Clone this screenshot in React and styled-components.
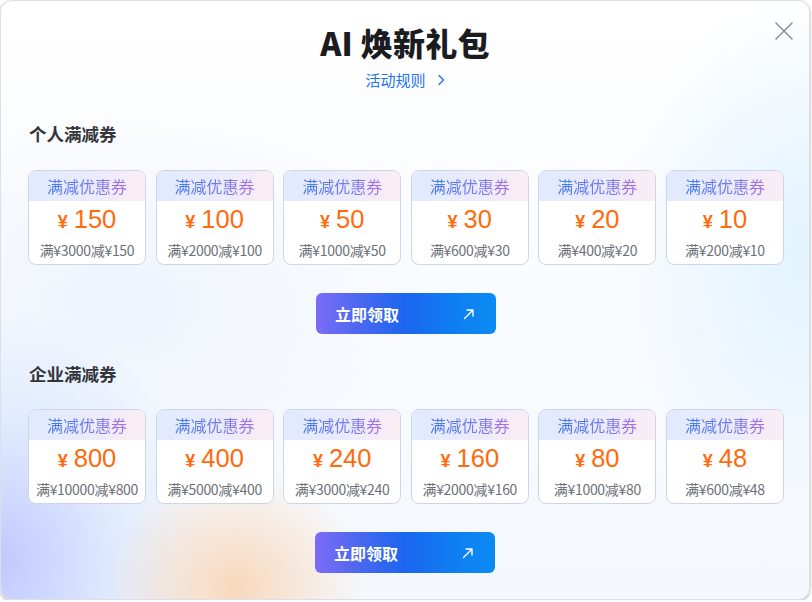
import styled, { createGlobalStyle } from "styled-components";

const GlobalStyle = createGlobalStyle`
  html, body {
    margin: 0;
    padding: 0;
    background: #fff;
  }
  body {
    font-family: "Noto Sans CJK SC", "Noto Sans", "Liberation Sans", sans-serif;
  }
`;

const Modal = styled.div`
  position: relative;
  box-sizing: border-box;
  width: 810px;
  height: 600px;
  border-radius: 12px;
  border: 1px solid #dcdfe6;
  box-shadow: 0 1px 3px rgba(0, 0, 0, 0.35);
  overflow: hidden;
  background:
    radial-gradient(ellipse 130px 120px at 235px 585px, rgba(250, 208, 172, 0.8), rgba(250, 208, 172, 0) 100%),
    radial-gradient(ellipse 210px 250px at 0px 560px, rgba(190, 198, 255, 0.95), rgba(210, 226, 255, 0.6) 55%, rgba(214, 228, 255, 0) 100%),
    radial-gradient(ellipse 200px 260px at 812px 250px, rgba(222, 242, 255, 0.9), rgba(222, 242, 255, 0) 100%),
    radial-gradient(ellipse 300px 200px at 120px 300px, rgba(236, 242, 252, 0.8), rgba(236, 242, 252, 0) 100%),
    linear-gradient(180deg, #ffffff 0%, #fbfcfe 30%, #f4f8fd 100%);
  padding: 18px 27px 0 27px;
  display: flex;
  flex-direction: column;
`;

const Close = styled.button`
  position: absolute;
  top: 19px;
  right: 14px;
  width: 22px;
  height: 22px;
  padding: 0;
  border: none;
  background: none;
  cursor: pointer;
  display: flex;
  align-items: center;
  justify-content: center;
`;

const Header = styled.header`
  display: flex;
  flex-direction: column;
  align-items: center;
`;

const Title = styled.h1`
  margin: 0;
  font-size: 32px;
  line-height: 46px;
  font-weight: 900;
  color: #1b1c1f;
  letter-spacing: 0.3px;
`;

const RulesLink = styled.a`
  margin-top: 5px;
  display: flex;
  align-items: center;
  gap: 11px;
  font-size: 15px;
  line-height: 20px;
  color: #2474f0;
  text-decoration: none;
  cursor: pointer;
`;

const SectionTitle = styled.h2`
  margin: ${(p) => p.$top}px 0 0 1px;
  font-size: 17.5px;
  line-height: 24px;
  font-weight: 700;
  color: #33353a;
`;

const CardRow = styled.div`
  margin-top: ${(p) => p.$top}px;
  display: grid;
  grid-template-columns: repeat(6, 118px);
  column-gap: 9.6px;
`;

const Card = styled.div`
  box-sizing: border-box;
  height: 95px;
  border: 1px solid #cdd6e6;
  border-radius: 8px;
  background: #fff;
  overflow: hidden;
  display: flex;
  flex-direction: column;
`;

const CardHead = styled.div`
  height: 30px;
  display: flex;
  align-items: center;
  justify-content: center;
  background: linear-gradient(90deg, #e2eafe 0%, #ebebfb 60%, #fbedf4 100%);
`;

const CardHeadText = styled.span`
  font-size: 16px;
  line-height: 22px;
  background: linear-gradient(90deg, #3d78f4 0%, #7c79ee 60%, #ad6ee6 100%);
  -webkit-background-clip: text;
  background-clip: text;
  color: transparent;
`;

const Amount = styled.div`
  margin-top: 3px;
  display: flex;
  align-items: baseline;
  justify-content: center;
  gap: 6px;
  color: #ff6a0d;
  height: 30px;
`;

const Yen = styled.span`
  font-family: "Liberation Sans", "Noto Sans CJK SC", sans-serif;
  font-size: 18px;
  font-weight: 700;
`;

const Num = styled.span`
  font-family: "Liberation Sans", Arial, sans-serif;
  font-size: 25.5px;
  line-height: 30px;
`;

const Rule = styled.div`
  margin-top: 7px;
  text-align: center;
  font-size: 14px;
  line-height: 18px;
  color: #6c7078;
  letter-spacing: -0.3px;
  white-space: nowrap;
`;

const ButtonWrap = styled.div`
  margin-top: ${(p) => p.$top}px;
  display: flex;
  justify-content: center;
  padding-left: ${(p) => p.$shift}px;
`;

const ClaimButton = styled.button`
  width: 180px;
  height: 41px;
  border: none;
  border-radius: 6px;
  padding: 0 20px 0 19px;
  display: flex;
  align-items: center;
  justify-content: space-between;
  background: linear-gradient(90deg, #7c6cf7 0%, #4a67f0 25%, #1b66ef 50%, #0e80f2 80%, #0a8bf3 100%);
  color: #fff;
  font-family: inherit;
  font-size: 16px;
  font-weight: 700;
  cursor: pointer;
`;

const personal = [
  ["150", "满¥3000减¥150"],
  ["100", "满¥2000减¥100"],
  ["50", "满¥1000减¥50"],
  ["30", "满¥600减¥30"],
  ["20", "满¥400减¥20"],
  ["10", "满¥200减¥10"],
];

const business = [
  ["800", "满¥10000减¥800"],
  ["400", "满¥5000减¥400"],
  ["240", "满¥3000减¥240"],
  ["160", "满¥2000减¥160"],
  ["80", "满¥1000减¥80"],
  ["48", "满¥600减¥48"],
];

const Arrow = () => (
  <svg width="14" height="14" viewBox="0 0 14 14" fill="none">
    <path d="M2.5 11.5 L11 3 M5 3 H11 V9" stroke="#fff" strokeWidth="1.4" strokeLinecap="round" strokeLinejoin="round" />
  </svg>
);

const Coupons = ({ items, top }) => (
  <CardRow $top={top}>
    {items.map(([value, rule]) => (
      <Card key={rule}>
        <CardHead>
          <CardHeadText>满减优惠券</CardHeadText>
        </CardHead>
        <Amount>
          <Yen>¥</Yen>
          <Num>{value}</Num>
        </Amount>
        <Rule>{rule}</Rule>
      </Card>
    ))}
  </CardRow>
);

export default function App() {
  return (
    <>
      <GlobalStyle />
      <Modal>
        <Close aria-label="close">
          <svg width="18" height="18" viewBox="0 0 18 18">
            <path d="M1 1 L17 17 M17 1 L1 17" stroke="#8a8d93" strokeWidth="1.5" strokeLinecap="round" />
          </svg>
        </Close>
        <Header>
          <Title>AI 焕新礼包</Title>
          <RulesLink>
            活动规则
            <svg width="8" height="12" viewBox="0 0 8 12">
              <path d="M2 1.5 L6.5 6 L2 10.5" stroke="#2474f0" strokeWidth="1.4" fill="none" strokeLinecap="round" strokeLinejoin="round" />
            </svg>
          </RulesLink>
        </Header>

        <SectionTitle $top={32}>个人满减券</SectionTitle>
        <Coupons items={personal} top={24} />
        <ButtonWrap $top={28} $shift={2}>
          <ClaimButton>
            立即领取
            <Arrow />
          </ClaimButton>
        </ButtonWrap>

        <SectionTitle $top={28}>企业满减券</SectionTitle>
        <Coupons items={business} top={23} />
        <ButtonWrap $top={28} $shift={0}>
          <ClaimButton>
            立即领取
            <Arrow />
          </ClaimButton>
        </ButtonWrap>
      </Modal>
    </>
  );
}
